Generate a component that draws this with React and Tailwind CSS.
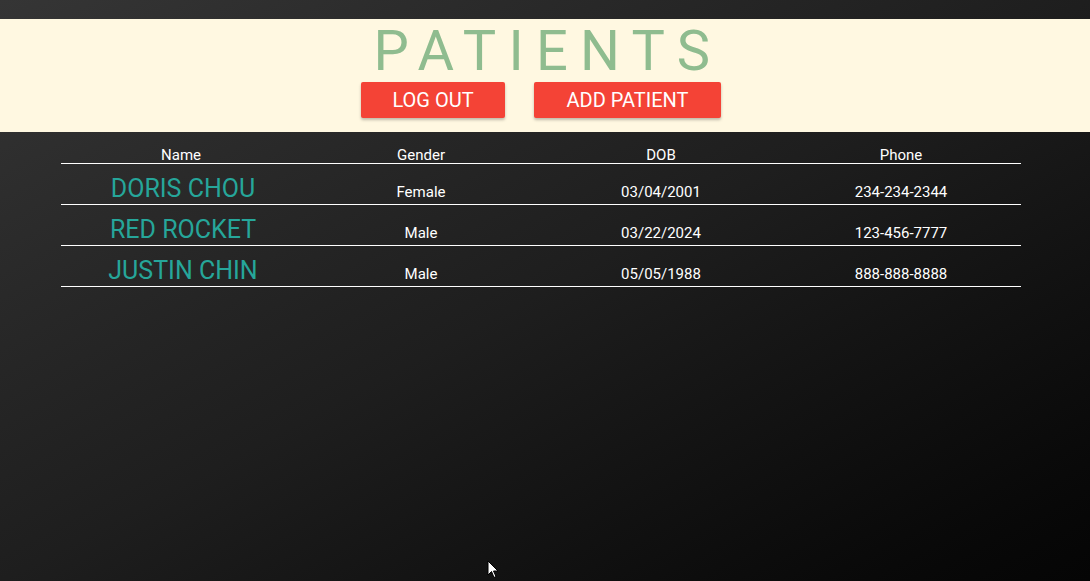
import React from 'react';

const patients = [
  { name: 'DORIS CHOU', gender: 'Female', dob: '03/04/2001', phone: '234-234-2344' },
  { name: 'RED ROCKET', gender: 'Male', dob: '03/22/2024', phone: '123-456-7777' },
  { name: 'JUSTIN CHIN', gender: 'Male', dob: '05/05/1988', phone: '888-888-8888' },
];

const App = () => {
  return (
    <div
      className="relative w-[1090px] h-[581px] overflow-hidden bg-gradient-to-br from-[#353535] via-[#1e1e1e] to-[#050505] pt-[19px]"
      style={{ fontFamily: 'Roboto, "Liberation Sans", sans-serif' }}
    >
      <div className="bg-[#fff8e1] h-[113px] flex flex-col items-center pt-[2px]">
        <h1 className="text-[56px] leading-[60px] font-normal tracking-[12.3px] pl-[6px] text-[#8fbc8f]">PATIENTS</h1>
        <div className="flex gap-[29px] mt-[1px] pr-[8px]">
          <button className="w-[144px] h-[36px] bg-[#f44336] text-white text-[20px] rounded-[2px] shadow-[0_2px_3px_rgba(0,0,0,0.25)]">
            LOG OUT
          </button>
          <button className="w-[187px] h-[36px] bg-[#f44336] text-white text-[20px] rounded-[2px] shadow-[0_2px_3px_rgba(0,0,0,0.25)]">
            ADD PATIENT
          </button>
        </div>
      </div>

      <div className="w-[960px] ml-[61px] mt-[12px]">
        <div className="grid grid-cols-4 text-center text-[15px] leading-[16px] pt-[3px] text-white border-b border-white">
          <div>Name</div>
          <div>Gender</div>
          <div>DOB</div>
          <div>Phone</div>
        </div>
        {patients.map((p) => (
          <div
            key={p.name}
            className="grid grid-cols-4 items-baseline text-center h-[41px] border-b border-white pt-[10px]"
          >
            <div className="text-[25px] leading-[30px] text-[#26a69a] translate-x-[2px]">{p.name}</div>
            <div className="text-[15px] text-white">{p.gender}</div>
            <div className="text-[15px] text-white">{p.dob}</div>
            <div className="text-[15px] text-white">{p.phone}</div>
          </div>
        ))}
      </div>

      <svg className="absolute left-[487px] top-[560px]" width="12" height="19" viewBox="0 0 12 19">
        <path d="M1 1 L1 15 L4.5 11.5 L7 17.5 L9 16.5 L6.5 11 L11 11 Z" fill="#fff" stroke="#000" strokeWidth="1" />
      </svg>
    </div>
  );
};

export default App;
